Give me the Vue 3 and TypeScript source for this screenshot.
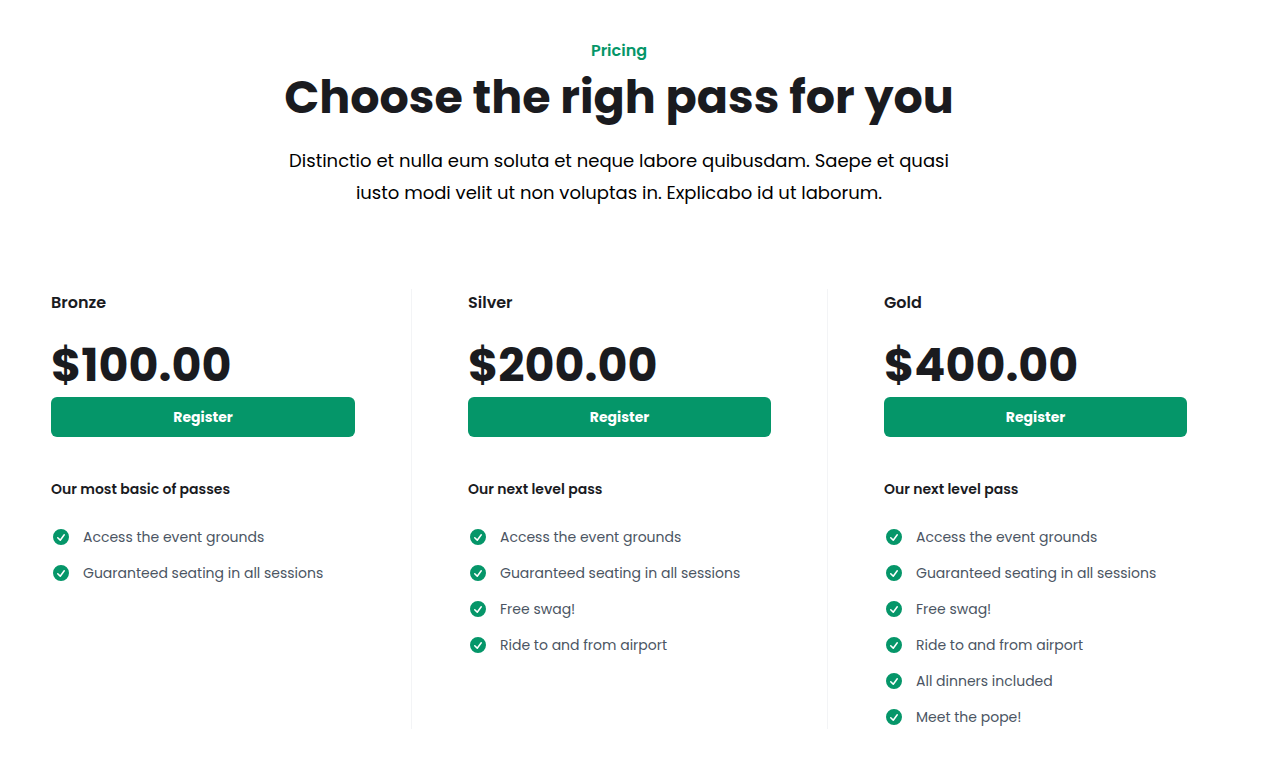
<script setup lang="ts">
interface Tier {
  id: string
  name: string
  price: string
  description: string
  features: string[]
}

const tiers: Tier[] = [
  {
    id: 'bronze',
    name: 'Bronze',
    price: '$100.00',
    description: 'Our most basic of passes',
    features: ['Access the event grounds', 'Guaranteed seating in all sessions'],
  },
  {
    id: 'silver',
    name: 'Silver',
    price: '$200.00',
    description: 'Our next level pass',
    features: [
      'Access the event grounds',
      'Guaranteed seating in all sessions',
      'Free swag!',
      'Ride to and from airport',
    ],
  },
  {
    id: 'gold',
    name: 'Gold',
    price: '$400.00',
    description: 'Our next level pass',
    features: [
      'Access the event grounds',
      'Guaranteed seating in all sessions',
      'Free swag!',
      'Ride to and from airport',
      'All dinners included',
      'Meet the pope!',
    ],
  },
]
</script>

<template>
  <main class="pricing">
    <header class="intro">
      <h1 class="eyebrow">Pricing</h1>
      <h2 class="headline">Choose the righ pass for you</h2>
      <p class="lead">
        Distinctio et nulla eum soluta et neque labore quibusdam. Saepe et quasi
        iusto modi velit ut non voluptas in. Explicabo id ut laborum.
      </p>
    </header>

    <div class="tiers">
      <section v-for="tier in tiers" :key="tier.id" class="tier" :aria-labelledby="tier.id">
        <h3 :id="tier.id" class="tier-name">{{ tier.name }}</h3>
        <p class="price">{{ tier.price }}</p>
        <button type="button" class="register">Register</button>
        <p class="description">{{ tier.description }}</p>
        <ul class="features">
          <li v-for="feature in tier.features" :key="feature" class="feature">
            <svg class="check" viewBox="0 0 20 20" fill="currentColor" aria-hidden="true">
              <path
                fill-rule="evenodd"
                clip-rule="evenodd"
                d="M10 18a8 8 0 100-16 8 8 0 000 16zm3.857-9.809a.75.75 0 00-1.214-.882l-3.483 4.79-1.88-1.88a.75.75 0 10-1.06 1.061l2.5 2.5a.75.75 0 001.137-.089l4-5.5z"
              />
            </svg>
            {{ feature }}
          </li>
        </ul>
      </section>
    </div>
  </main>
</template>

<style>
body {
  margin: 0;
  background: #fff;
}
</style>

<style scoped>
.pricing {
  box-sizing: border-box;
  max-width: 1275px;
  padding: 37px 88px 48px 51px;
  overflow: hidden;
  font-family: Poppins, Inter, "Liberation Sans", sans-serif;
  color: #1a1b1f;
}

h1,
h2,
h3,
p,
ul {
  margin: 0;
  padding: 0;
}

.intro {
  text-align: center;
}

.eyebrow {
  font-size: 16px;
  line-height: 28px;
  font-weight: 600;
  color: #059669;
}

.headline {
  margin-top: 8px;
  font-size: 46px;
  line-height: 48px;
  font-weight: 700;
}

.lead {
  max-width: 672px;
  margin: 24px auto 0;
  font-size: 18px;
  line-height: 32px;
  color: #000;
}

.tiers {
  display: grid;
  grid-template-columns: repeat(3, minmax(0, 1fr));
  margin: 80px -56px 0;
}

.tier {
  padding: 0 56px;
}

.tier + .tier {
  border-left: 1px solid #f3f4f6;
}

.tier-name {
  font-size: 16px;
  line-height: 28px;
  font-weight: 600;
}

.price {
  margin-top: 24px;
  font-size: 46px;
  line-height: 48px;
  font-weight: 700;
}

.register {
  display: block;
  width: 100%;
  margin-top: 8px;
  padding: 8px 12px;
  border: 0;
  border-radius: 6px;
  background: #059669;
  color: #fff;
  font-family: inherit;
  font-size: 14px;
  line-height: 24px;
  font-weight: 700;
  cursor: pointer;
}

.description {
  margin-top: 40px;
  font-size: 14px;
  line-height: 24px;
  font-weight: 600;
}

.features {
  display: grid;
  gap: 12px;
  margin-top: 24px;
  list-style: none;
  font-size: 14px;
  line-height: 24px;
  color: #4b5563;
}

.feature {
  display: flex;
  gap: 12px;
}

.check {
  flex: none;
  width: 20px;
  height: 24px;
  color: #059669;
}
</style>
